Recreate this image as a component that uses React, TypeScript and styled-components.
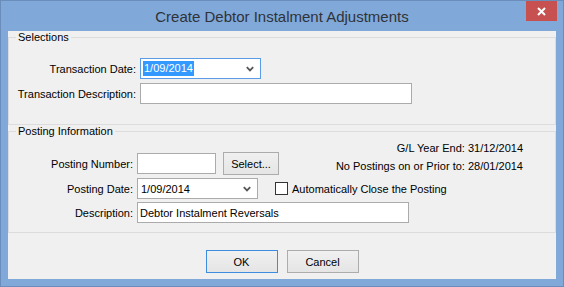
import React from 'react';
import styled, { createGlobalStyle } from 'styled-components';

const GlobalStyle = createGlobalStyle`
  html, body {
    margin: 0;
    padding: 0;
    background: #ffffff;
  }
  body {
    font-family: "Liberation Sans", Arial, sans-serif;
    font-size: 11px;
    color: #000;
  }
`;

export const Window = styled.div`
  width: 564px;
  height: 287px;
  box-sizing: border-box;
  border: 1px solid #6a8dbb;
  background: #80a8d9;
  padding: 0 7px 7px;
  display: flex;
  flex-direction: column;
`;

export const TitleBar = styled.div`
  height: 30px;
  display: grid;
  grid-template-columns: 1fr auto 1fr;
  margin: 0 -7px;
`;

export const Title = styled.div`
  grid-column: 2;
  align-self: center;
  font-size: 15px;
  line-height: 20px;
  color: #2f3338;
  margin-top: 1px;
`;

export const CloseButton = styled.div`
  grid-column: 3;
  justify-self: end;
  align-self: start;
  width: 31px;
  height: 20px;
  margin-right: 6px;
  background: #c75050;
  display: flex;
  align-items: center;
  justify-content: center;
`;

export const Client = styled.div`
  flex: 1;
  background: #f0f0f0;
  display: flex;
  flex-direction: column;
`;

export const Group = styled.fieldset<{ $padBottom: number; $padTop: number }>`
  margin: 0;
  border: 1px solid #dcdcdc;
  padding: ${(p) => p.$padTop}px 0 ${(p) => p.$padBottom}px 0;
  min-width: 0;
`;

export const Legend = styled.legend`
  margin-left: 7px;
  padding: 0 2px;
  line-height: 13px;
  font-size: 11px;
`;

export const Rows = styled.div<{ $gap: number }>`
  display: flex;
  flex-direction: column;
  gap: ${(p) => p.$gap}px;
`;

export const FieldRow = styled.div<{ $labelWidth: number; $alignEnd?: boolean; $wide?: boolean }>`
  display: flex;
  align-items: center;
  align-self: ${(p) => (p.$alignEnd ? 'end' : 'auto')};
  grid-column: ${(p) => (p.$wide ? '1 / -1' : 'auto')};
  & > label {
    width: ${(p) => p.$labelWidth}px;
    margin-right: 4px;
  }
`;

export const Label = styled.label`
  text-align: right;
  white-space: nowrap;
  flex-shrink: 0;
`;

export const TextBox = styled.div<{ $width: number }>`
  width: ${(p) => p.$width}px;
  height: 21px;
  box-sizing: border-box;
  border: 1px solid #ababab;
  background: #fff;
  padding: 0 2px;
  display: flex;
  align-items: center;
  white-space: nowrap;
`;

export const Combo = styled.div<{ $width: number; $focused?: boolean }>`
  width: ${(p) => p.$width}px;
  height: 21px;
  box-sizing: border-box;
  border: 1px solid ${(p) => (p.$focused ? '#5a9de6' : '#ababab')};
  background: #fff;
  padding: 0 6px 0 ${(p) => (p.$focused ? 2 : 3)}px;
  display: flex;
  align-items: center;
  justify-content: space-between;
`;

export const Selected = styled.span`
  background: #3399ff;
  color: #fff;
  line-height: 15px;
  padding: 0 1px;
`;

export const Button = styled.div<{ $width: number; $default?: boolean; $gapLeft?: number }>`
  width: ${(p) => p.$width}px;
  height: 23px;
  margin-left: ${(p) => p.$gapLeft ?? 0}px;
  box-sizing: border-box;
  border: 1px solid ${(p) => (p.$default ? '#3c8de0' : '#acacac')};
  background: linear-gradient(#f0f0f0, #e5e5e5);
  display: flex;
  align-items: center;
  justify-content: center;
`;

export const PostingGrid = styled.div`
  display: grid;
  grid-template-columns: 1fr auto;
  row-gap: 3px;
`;

export const Info = styled.div`
  text-align: right;
  line-height: 18px;
  padding-right: 32px;
  white-space: nowrap;
`;

export const Check = styled.span`
  width: 13px;
  height: 13px;
  box-sizing: border-box;
  border: 1px solid #333;
  background: #fff;
  margin: 0 4px 0 17px;
  flex-shrink: 0;
`;

export const Footer = styled.div`
  flex: 1;
  display: flex;
  justify-content: center;
  align-items: flex-start;
  gap: 9px;
  padding-top: 17px;
`;

const Chevron = () => (
  <svg width="8" height="6" viewBox="0 0 8 6">
    <path d="M0.8 1.2 L4 4.4 L7.2 1.2" fill="none" stroke="#555" strokeWidth="1.8" />
  </svg>
);

const CloseIcon = () => (
  <svg width="9" height="9" viewBox="0 0 9 9">
    <path d="M1 1 L8 8 M8 1 L1 8" stroke="#fff" strokeWidth="2" />
  </svg>
);

export default function App() {
  return (
    <>
      <GlobalStyle />
      <Window>
        <TitleBar>
          <Title>Create Debtor Instalment Adjustments</Title>
          <CloseButton>
            <CloseIcon />
          </CloseButton>
        </TitleBar>
        <Client>
          <Group $padTop={14} $padBottom={20}>
            <Legend>Selections</Legend>
            <Rows $gap={4}>
              <FieldRow $labelWidth={127}>
                <Label>Transaction Date:</Label>
                <Combo $width={121} $focused>
                  <Selected>1/09/2014</Selected>
                  <Chevron />
                </Combo>
              </FieldRow>
              <FieldRow $labelWidth={127}>
                <Label>Transaction Description:</Label>
                <TextBox $width={272} />
              </FieldRow>
            </Rows>
          </Group>
          <Group $padTop={1} $padBottom={9}>
            <Legend>Posting Information</Legend>
            <PostingGrid>
              <FieldRow $labelWidth={124} $alignEnd>
                <Label>Posting Number:</Label>
                <TextBox $width={79} />
                <Button $width={56} $gapLeft={7}>Select...</Button>
              </FieldRow>
              <Info>
                <div>G/L Year End: 31/12/2014</div>
                <div>No Postings on or Prior to: 28/01/2014</div>
              </Info>
              <FieldRow $labelWidth={124} $wide>
                <Label>Posting Date:</Label>
                <Combo $width={121}>
                  <span>1/09/2014</span>
                  <Chevron />
                </Combo>
                <Check />
                <span>Automatically Close the Posting</span>
              </FieldRow>
              <FieldRow $labelWidth={124} $wide>
                <Label>Description:</Label>
                <TextBox $width={272}>Debtor Instalment Reversals</TextBox>
              </FieldRow>
            </PostingGrid>
          </Group>
          <Footer>
            <Button $width={72} $default>OK</Button>
            <Button $width={72}>Cancel</Button>
          </Footer>
        </Client>
      </Window>
    </>
  );
}
